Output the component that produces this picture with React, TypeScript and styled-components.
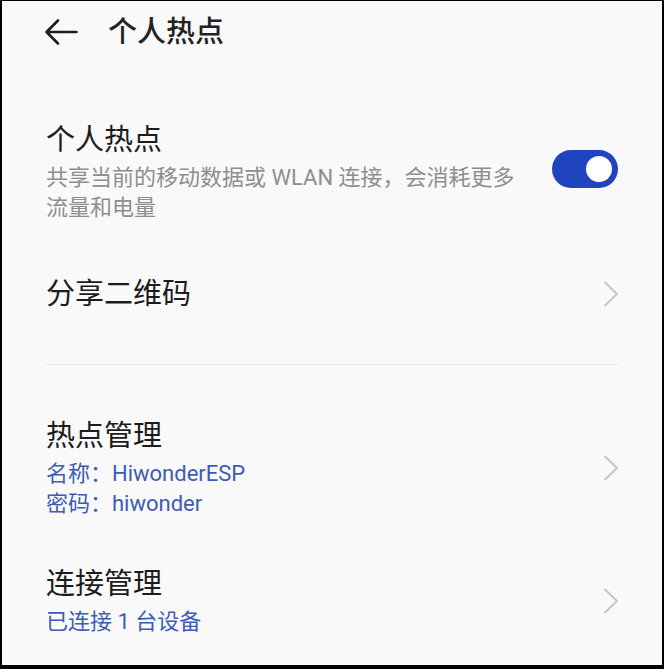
import React from "react";
import styled, { createGlobalStyle } from "styled-components";

const GlobalStyle = createGlobalStyle`
  html, body {
    margin: 0;
    padding: 0;
    background: #000;
  }
  * { box-sizing: border-box; }
`;

const Frame = styled.div`
  width: 664px;
  height: 669px;
  border-style: solid;
  border-color: #000;
  border-width: 1px 2px 4px 2px;
  background: #f9f9f9;
  font-family: Roboto, "Noto Sans CJK SC", sans-serif;
  display: flex;
  flex-direction: column;
  overflow: hidden;
`;

const Header = styled.header`
  height: 61px;
  display: flex;
  align-items: center;
  padding: 0 0 0 42px;
  gap: 30px;
`;

const BackButton = styled.button`
  border: none;
  background: none;
  padding: 0;
  width: 34px;
  height: 28px;
  display: flex;
  align-items: center;
  justify-content: center;
  color: #1e1e1e;
  cursor: pointer;
`;

const HeaderTitle = styled.h1`
  margin: 0;
  font-size: 29px;
  line-height: 38px;
  font-weight: 500;
  color: #222;
`;

const Content = styled.main`
  padding: 33px 44px 0 44px;
  display: flex;
  flex-direction: column;
`;

const Row = styled.div<{ $py: number }>`
  display: flex;
  align-items: center;
  justify-content: space-between;
  gap: 24px;
  padding: ${(p) => p.$py}px 0;
`;

const TextCol = styled.div`
  display: flex;
  flex-direction: column;
  gap: 4px;
  min-width: 0;
`;

const Title = styled.div`
  font-size: 29px;
  line-height: 38px;
  color: #1c1c1c;
`;

const Sub = styled.div<{ $tone: "grey" | "blue" }>`
  font-size: 22px;
  line-height: 30px;
  color: ${(p) => (p.$tone === "blue" ? "#3d5cb2" : "#8e8e8e")};
  max-width: 480px;
`;

const Divider = styled.hr`
  border: none;
  height: 1px;
  background: #e7e7e7;
  margin: 25px 0 29px 0;
`;

const Toggle = styled.div<{ $on: boolean }>`
  width: 66px;
  height: 38px;
  flex: none;
  margin-bottom: 6px;
  border-radius: 19px;
  padding: 6px;
  background: ${(p) => (p.$on ? "#2044be" : "#cfcfcf")};
  display: flex;
  justify-content: ${(p) => (p.$on ? "flex-end" : "flex-start")};
`;

const Knob = styled.div`
  width: 26px;
  height: 26px;
  border-radius: 50%;
  background: #fff;
`;

const ChevronBox = styled.div`
  width: 16px;
  height: 26px;
  flex: none;
  margin-right: -1px;
  display: flex;
  color: #c6c6c6;
`;

const Chevron = () => (
  <ChevronBox>
    <svg width="16" height="26" viewBox="0 0 16 26" fill="none">
      <path d="M2 1.5 L14 13 L2 24.5" stroke="currentColor" strokeWidth="2" strokeLinecap="round" strokeLinejoin="round" />
    </svg>
  </ChevronBox>
);

const BackArrow = () => (
  <svg width="34" height="28" viewBox="0 0 34 28" fill="none">
    <path d="M14 2.5 L2.5 14 L14 25.5 M2.5 14 H32.5" stroke="currentColor" strokeWidth="2.6" strokeLinecap="round" strokeLinejoin="round" />
  </svg>
);

export default function App() {
  return (
    <>
      <GlobalStyle />
      <Frame>
        <Header>
          <BackButton aria-label="返回">
            <BackArrow />
          </BackButton>
          <HeaderTitle>个人热点</HeaderTitle>
        </Header>
        <Content>
          <Row $py={26}>
            <TextCol>
              <Title>个人热点</Title>
              <Sub $tone="grey">共享当前的移动数据或 WLAN 连接，会消耗更多流量和电量</Sub>
            </TextCol>
            <Toggle $on>
              <Knob />
            </Toggle>
          </Row>
          <Row $py={26}>
            <TextCol>
              <Title>分享二维码</Title>
            </TextCol>
            <Chevron />
          </Row>
          <Divider />
          <Row $py={23}>
            <TextCol>
              <Title>热点管理</Title>
              <Sub $tone="blue">
                名称：HiwonderESP
                <br />
                密码：hiwonder
              </Sub>
            </TextCol>
            <Chevron />
          </Row>
          <Row $py={23}>
            <TextCol>
              <Title>连接管理</Title>
              <Sub $tone="blue">已连接 1 台设备</Sub>
            </TextCol>
            <Chevron />
          </Row>
        </Content>
      </Frame>
    </>
  );
}
